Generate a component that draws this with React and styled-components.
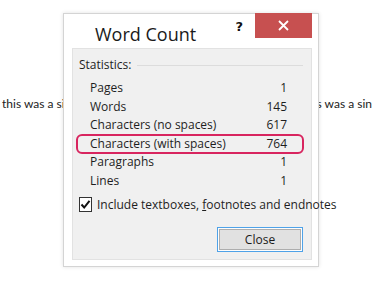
import React from "react";
import styled, { createGlobalStyle } from "styled-components";

const GlobalStyle = createGlobalStyle`
  html, body {
    margin: 0;
    padding: 0;
    background: #ffffff;
  }
  body {
    font-family: "Open Sans", "Noto Sans", sans-serif;
    color: #1e1e1e;
  }
`;

const Page = styled.div`
  position: relative;
  width: 375px;
  height: 281px;
  overflow: hidden;
  background: #ffffff;
`;

const DocLine = styled.div`
  display: flex;
  justify-content: space-between;
  padding: 96px 3px 0 2px;
  font-family: Lato, "Open Sans", sans-serif;
  font-size: 12px;
  white-space: nowrap;
  color: #222;
`;

const DocText = styled.span`
  display: block;
  flex-shrink: 0;
`;

const Dialog = styled.div`
  position: absolute;
  left: 63px;
  top: 13px;
  width: 254px;
  height: 252px;
  background: #ffffff;
  border: 1px solid #d4d4d4;
  box-shadow: 0 0 4px rgba(0, 0, 0, 0.12);
  display: flex;
  flex-direction: column;
`;

const TitleBar = styled.div`
  display: flex;
  align-items: flex-start;
  height: 34px;
  padding-left: 31px;
`;

const Title = styled.div`
  font-size: 18px;
  line-height: 20px;
  padding-top: 10px;
  color: #1a1a1a;
  flex: 1;
`;

const HelpMark = styled.div`
  font-family: "DejaVu Sans", sans-serif;
  font-weight: bold;
  font-size: 13px;
  padding-top: 5px;
  margin-right: 12px;
  color: #111;
`;

const CloseX = styled.div`
  width: 57px;
  height: 25px;
  margin-top: -1px;
  margin-right: 6px;
  background: #c75050;
  display: flex;
  align-items: center;
  justify-content: center;
`;

const Panel = styled.div`
  flex: 1;
  margin: 0 6px 6px 8px;
  background: #f0f0f0;
  border: 1px solid #e2e2e2;
  display: flex;
  flex-direction: column;
  padding: 8px 8px 0 6px;
`;

const GroupHead = styled.div`
  display: flex;
  align-items: center;
  gap: 6px;
  font-size: 12px;
  line-height: 16px;
  &::after {
    content: "";
    flex: 1;
    height: 1px;
    background: #dcdcdc;
  }
`;

const StatList = styled.div`
  display: flex;
  flex-direction: column;
  padding: 6px 16px 0 11px;
`;

const StatRow = styled.div`
  position: relative;
  display: flex;
  justify-content: space-between;
  font-size: 12px;
  line-height: 18.5px;
  &::before {
    content: "";
    display: ${(p) => (p.$highlight ? "block" : "none")};
    position: absolute;
    left: -14px;
    right: -17px;
    top: -1px;
    bottom: -1px;
    border: 2px solid #d8255f;
    border-radius: 6px;
  }
`;

const CheckRow = styled.label`
  display: flex;
  align-items: center;
  gap: 5px;
  margin-top: 6px;
  font-size: 12px;
  white-space: nowrap;
`;

const Box = styled.span`
  width: 13px;
  height: 13px;
  border: 1px solid #333;
  background: #fff;
  display: flex;
  align-items: center;
  justify-content: center;
`;

const Underline = styled.span`
  text-decoration: underline;
`;

const Footer = styled.div`
  display: flex;
  justify-content: flex-end;
  margin-top: 14px;
`;

const Button = styled.button`
  width: 86px;
  height: 25px;
  border: 1px solid #4ea2e8;
  padding: 0;
  background: #e1e1e1;
  box-shadow: inset 0 0 0 1px #fdfdfd, inset 0 0 0 2px #adadad;
  font-family: "Open Sans", "Noto Sans", sans-serif;
  font-size: 12px;
  color: #1a1a1a;
`;

const stats = [
  ["Pages", 1],
  ["Words", 145],
  ["Characters (no spaces)", 617],
  ["Characters (with spaces)", 764, true],
  ["Paragraphs", 1],
  ["Lines", 1],
];

const App = () => {
  return (
    <Page>
      <GlobalStyle />
      <DocLine>
        <DocText>this was a si</DocText>
        <DocText>is was a sin</DocText>
      </DocLine>
      <Dialog>
        <TitleBar>
          <Title>Word Count</Title>
          <HelpMark>?</HelpMark>
          <CloseX>
            <svg width="11" height="11" viewBox="0 0 11 11">
              <path d="M1 1 L10 10 M10 1 L1 10" stroke="#fff" strokeWidth="1.8" />
            </svg>
          </CloseX>
        </TitleBar>
        <Panel>
          <GroupHead>Statistics:</GroupHead>
          <StatList>
            {stats.map(([label, value, hl]) => (
              <StatRow key={label} $highlight={hl}>
                <span>{label}</span>
                <span>{value}</span>
              </StatRow>
            ))}
          </StatList>
          <CheckRow>
            <Box>
              <svg width="11" height="11" viewBox="0 0 11 11">
                <path d="M1.5 5.5 L4.2 8.5 L9.5 1.8" stroke="#111" strokeWidth="2" fill="none" />
              </svg>
            </Box>
            <span>
              Include textboxes, <Underline>f</Underline>ootnotes and endnotes
            </span>
          </CheckRow>
          <Footer>
            <Button>Close</Button>
          </Footer>
        </Panel>
      </Dialog>
    </Page>
  );
};

export default App;
